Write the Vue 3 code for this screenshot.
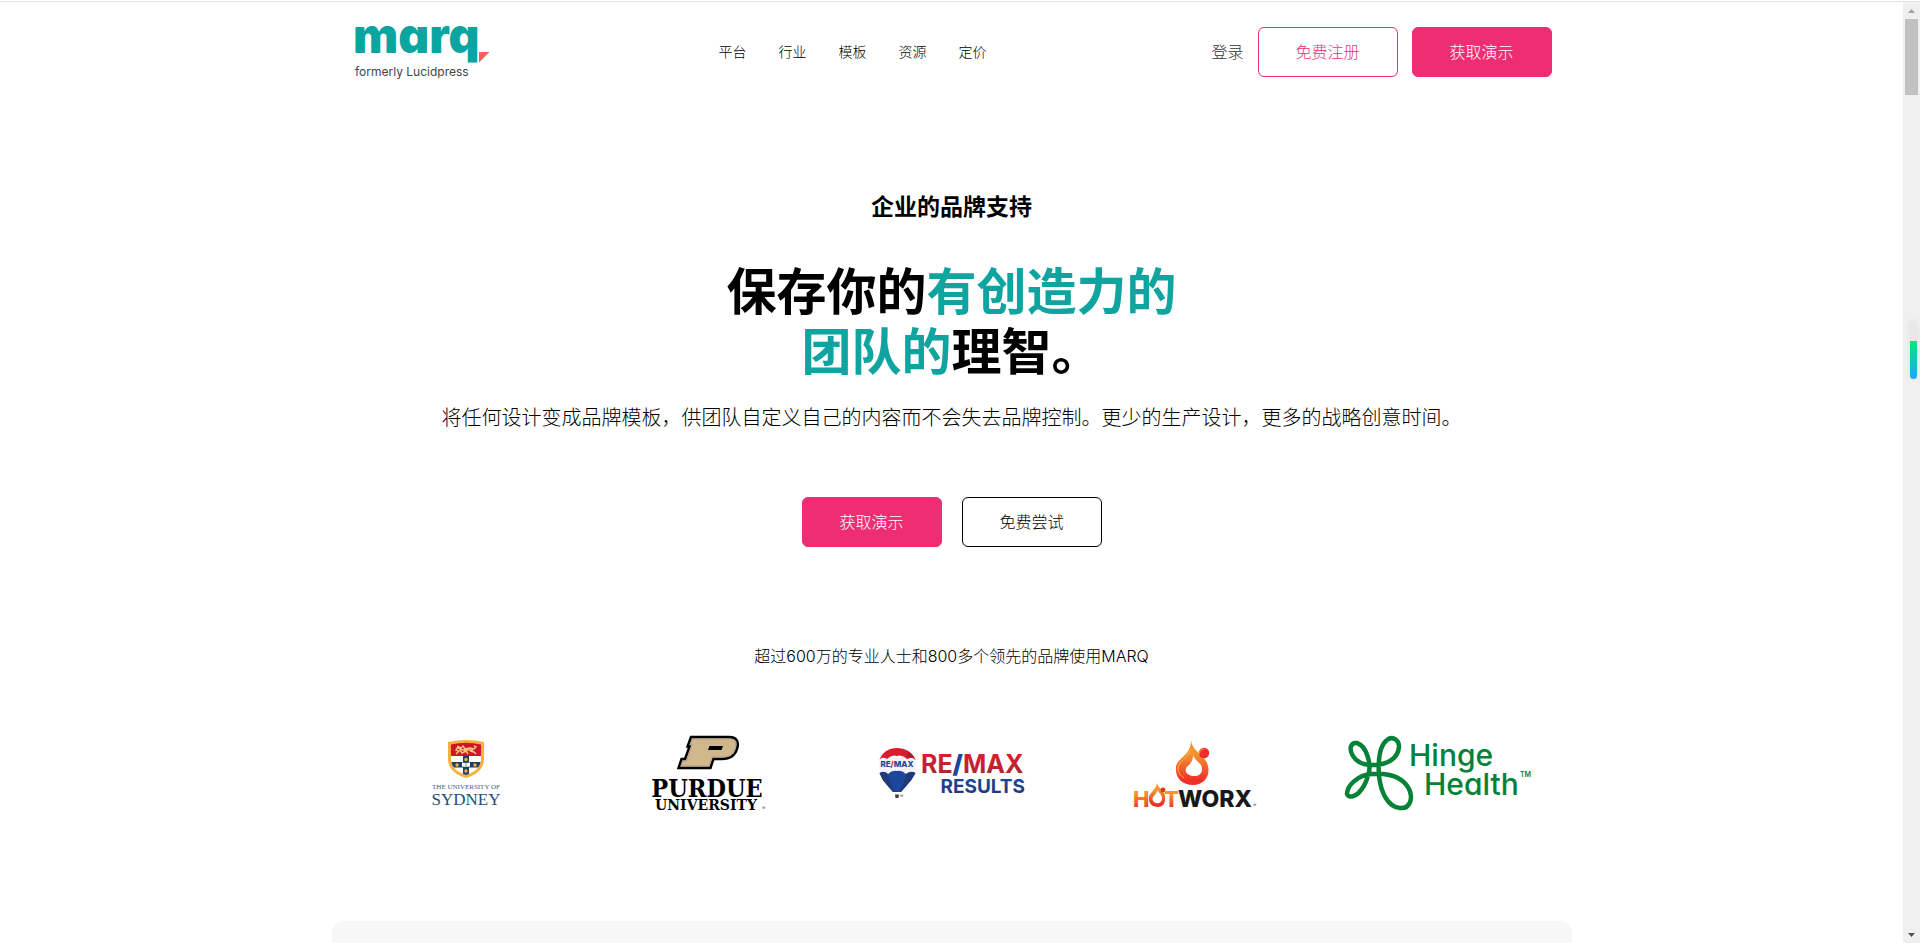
<script setup>
const navItems = ['平台', '行业', '模板', '资源', '定价']
</script>

<template>
  <div class="window">
    <div class="page">
      <header class="header">
        <a class="brand" href="#" aria-label="marq">
          <svg width="136" height="54" viewBox="0 0 136 54">
            <text class="wordmark" x="-2" y="28">marq</text>
            <path d="M124 27H134.500L124 37.500Z" fill="#f4605c" />
            <text class="formerly" x="0" y="51">formerly Lucidpress</text>
          </svg>
        </a>
        <nav class="nav">
          <a v-for="item in navItems" :key="item" href="#">{{ item }}</a>
        </nav>
        <div class="actions">
          <a class="login" href="#">登录</a>
          <button class="btn outline-pink">免费注册</button>
          <button class="btn pink">获取演示</button>
        </div>
      </header>

      <main class="hero">
        <h2>企业的品牌支持</h2>
        <h1>保存你的<em>有创造力的<br />团队的</em>理智。</h1>
        <p class="lead">将任何设计变成品牌模板，供团队自定义自己的内容而不会失去品牌控制。更少的生产设计，更多的战略创意时间。</p>
        <div class="cta">
          <button class="btn pink">获取演示</button>
          <button class="btn outline-black">免费尝试</button>
        </div>
        <p class="stat">超过600万的专业人士和800多个领先的品牌使用MARQ</p>
      </main>

      <section class="logos">
        <div>
          <svg width="70" height="76" viewBox="0 0 70 76">
            <path d="M17 6Q35 2 53 6V23C53 33 45 39 35 42 25 39 17 33 17 23Z" fill="#f6b13c" />
            <path d="M20 8.500Q35 5 50 8.500V20H20Z" fill="#d0142c" />
            <path d="M20 20H50V23C50 31 44 36 35 39 26 36 20 31 20 23Z" fill="#fff" />
            <path d="M32 20H38V26H49.500Q49 30 47 31.500H38V38L35 39 32 38V31.500H23Q21 30 20.500 26H32Z" fill="#1d3f63" />
            <path d="M25 18 28 15 25 14 27 10.500 30 12 32 10 34 13 39 12 43 13 45 11 43 10M29 14 31 17 35 15 37 18M39 15 43 16 45 18M27 12 32 14 42 14" fill="none" stroke="#f8c77b" stroke-width="1.400" />
            <path d="M31 26.500 35 27 39 26.500V30.500L35 31 31 30.500Z" fill="#fff" />
            <path d="M35 27V31" stroke="#1d3f63" stroke-width=".6" />
            <g fill="#f6b13c">
              <circle cx="35" cy="23.500" r="1.700" /><circle cx="26" cy="29" r="1.700" />
              <circle cx="44" cy="29" r="1.700" /><circle cx="35" cy="35" r="1.700" />
            </g>
            <text class="syd-small" x="35" y="53" text-anchor="middle">THE UNIVERSITY OF</text>
            <text class="syd" x="35" y="69" text-anchor="middle">SYDNEY</text>
          </svg>
        </div>
        <div>
          <svg width="116" height="76" viewBox="0 0 116 76">
            <path d="M40 1H78C87 1 88 7 86 13 84 20 79 23 71 23H62.500L59.500 32H27.500L30.500 23H34L38.500 10.500H36.500Z" fill="#d0b88c" stroke="#000" stroke-width="2.400" />
            <path d="M42 3H78C85 3 85.500 7 84 12.500 82 19 78 21 71 21H61L58 30H30L32 25H35.500L41.500 8.500H39.500Z" fill="none" stroke="#a49b91" stroke-width=".8" />
            <path d="M58.500 10H72L70.500 14H57Z" fill="#000" />
            <text class="purdue" x="56" y="61" text-anchor="middle">PURDUE</text>
            <text class="univ" x="55" y="74" text-anchor="middle">UNIVERSITY</text>
            <text class="reg" x="111" y="74">®</text>
          </svg>
        </div>
        <div>
          <svg width="148" height="76" viewBox="0 0 148 76">
            <defs>
              <linearGradient id="remaxRed" x1="0" y1="0" x2="0" y2="1">
                <stop offset=".25" stop-color="#dc1b2e" /><stop offset=".9" stop-color="#9f2c31" />
              </linearGradient>
              <linearGradient id="remaxBlue" x1="0" y1="0" x2="0" y2="1">
                <stop offset="0" stop-color="#1948a3" /><stop offset="1" stop-color="#203675" />
              </linearGradient>
            </defs>
            <path d="M1 25Q19 17 38 25L37 38 2 38Z" fill="#f3f3f5" />
            <path d="M1.500 24C4 16 11 12 19 12S35 16 37.500 24Q34 20 29 23 24 18 19 20 14 18 9 23 4 20 1.500 24Z" fill="#d91d2f" />
            <path d="M29 15Q35 18 37.500 24 34 20 30 23Z" fill="#a91d29" />
            <path d="M1.500 37Q6 34 10 38 14 34 19 35 24 34 28 38 33 34 37.500 37 34 44 29 49L23 56H15L9 49Q4 44 1.500 37Z" fill="#1c469c" />
            <path d="M10 38Q13 49 16 56H15L9 49Q4 44 1.500 37 7 35 10 38ZM28 38Q25 49 22 56H23L29 49Q34 44 37.500 37 32 35 28 38Z" fill="#203a79" />
            <path d="M17 58.500H21L20.500 62H17.500Z" fill="#443d40" />
            <text class="balloon" x="19" y="31" text-anchor="middle">RE<tspan fill="#d91d2f">/</tspan>MAX</text>
            <text class="reg" x="22" y="62">®</text>
            <text class="remax" x="43" y="37">RE<tspan class="slash">/</tspan>MAX</text>
            <text class="results" x="147" y="57" text-anchor="end">RESULTS</text>
          </svg>
        </div>
        <div>
          <svg width="124" height="76" viewBox="0 0 124 76">
            <defs>
              <linearGradient id="flame" x1="0" y1="0" x2="0" y2="1">
                <stop offset=".3" stop-color="#f6942e" /><stop offset=".9" stop-color="#ef3029" />
              </linearGradient>
            </defs>
            <path d="M58 4C59 14 68 17 73 25 79 35 74 49 60 49 49 49 42 42 43 31 44 22 58 20 58 4Z" fill="url(#flame)" />
            <path d="M60 19C61 23 66 26 68 29 71 36 67 40 61 40 54 40 49 34 56 29 59 26 60 23 60 19Z" fill="#fff" />
            <path d="M57 14C55 23 46 24 45 32 45 37 48 40 51 42" fill="none" stroke="#fbb846" stroke-width="1" />
            <circle cx="71" cy="17" r="5.200" fill="#ed2d2a" />
            <path d="M66.500 18A5 5 0 0 1 71 13" fill="none" stroke="#fa9552" stroke-width="1" />
            <text class="hot" x="0" y="71">H</text>
            <path d="M24 47C25 52 31 54 32 60 33 67 30 71 25 71 19 71 15 67 16 61 17 56 23 54 24 47Z" fill="url(#flame)" />
            <path d="M25 54C25 57 29 58 29 62 29 66 26 68 23 67 18 65 19 61 22 59Z" fill="#fff" />
            <circle cx="30" cy="54" r="2.400" fill="#ed2d2a" />
            <text class="hot" x="31" y="71">T</text>
            <text class="worx" x="45" y="71">WORX</text>
            <text class="reg" x="120" y="71">®</text>
          </svg>
        </div>
        <div>
          <svg width="186" height="76" viewBox="0 0 186 76">
            <g fill="none" stroke="#058237" stroke-width="4.500">
              <path d="M23 39C27 30 22 10 12 7 5 6 4 14 8 20 12 27 19 29 28 29 43 29 53 22 54 11 54 3 47 0 42 4 34 10 33 25 34 40 36 57 43 71 55 72 66 73 68 61 64 53 57 40 42 37 27 38 12 39 2 50 2 58 4 63 12 60 16 54Q21 48 23 39Z" />
            </g>
            <text class="hinge" x="64" y="30">Hinge</text>
            <text class="hinge" x="79" y="59">Health</text>
            <text class="tm" x="175" y="41">TM</text>
          </svg>
        </div>
      </section>

      <section class="panel"></section>
    </div>

    <div class="scrollbar">
      <svg class="arrow" width="7" height="4" viewBox="0 0 7 4"><path d="M0 4 3.500 0 7 4Z" fill="#a3a3a3" /></svg>
      <div class="thumb"></div>
      <div class="meter"></div>
      <svg class="arrow down" width="7" height="4" viewBox="0 0 7 4"><path d="M0 0H7L3.500 4Z" fill="#505050" /></svg>
    </div>
  </div>
</template>

<style>
body {
  margin: 0;
  background: #fff;
}
</style>

<style scoped>
.window {
  display: flex;
  box-sizing: border-box;
  height: 100vh;
  overflow: hidden;
  padding-top: 1px;
  font-family: Inter, "Noto Sans CJK SC", sans-serif;
  font-weight: 300;
  color: #000;
}
.page {
  flex: 1;
  display: flex;
  flex-direction: column;
  border-top: 1px solid #e5e5e5;
}
.header,
.panel {
  box-sizing: border-box;
  width: 100%;
  max-width: 1240px;
  margin: 0 auto;
}
.header {
  display: flex;
  align-items: center;
  padding: 23px 20px 0 23px;
}
.brand {
  display: block;
  height: 54px;
}
svg {
  display: block;
  overflow: visible;
}
.nav {
  display: flex;
  gap: 32px;
  margin-left: 228px;
  padding-bottom: 3px;
  font-size: 14px;
}
a {
  color: inherit;
  text-decoration: none;
}
.actions {
  display: flex;
  align-items: center;
  gap: 14px;
  margin-left: auto;
}
.login {
  padding-bottom: 3px;
  color: #333;
  font-size: 16px;
}
.btn {
  width: 140px;
  height: 50px;
  padding: 0 0 3px;
  border: 1px solid #ee2d72;
  border-radius: 6px;
  background: #fff;
  color: #ee2d72;
  font: inherit;
  font-size: 16px;
}
.btn.pink {
  background: #ee2d72;
  color: #fff;
}
.btn.outline-black {
  border-color: #000;
  color: #000;
}
.hero {
  display: flex;
  flex-direction: column;
  align-items: center;
  text-align: center;
}
h2 {
  margin: 110px 0 0;
  font-size: 23px;
  line-height: 36px;
}
h1 {
  margin: 37px 0 0;
  font-size: 50px;
  line-height: 60px;
}
h1 em {
  color: #10a4a0;
  font-style: normal;
}
.lead {
  margin: 21px 0 0;
  font-size: 20px;
  line-height: 30px;
}
.cta {
  display: flex;
  gap: 20px;
  margin-top: 64px;
}
.stat {
  margin: 96px 0 0;
  font-size: 16px;
  line-height: 26px;
}
.logos {
  display: grid;
  grid-template-columns: repeat(5, 1fr);
  justify-items: center;
  width: 100%;
  max-width: 1215px;
  margin: 67px auto 0;
}
.panel {
  flex: 1;
  margin-top: 109px;
  border-radius: 12px 12px 0 0;
  background: #f7f7f7;
}
.wordmark {
  font: 900 48px Inter, sans-serif;
  font-feature-settings: "cv11";
  fill: #0aa5a1;
}
.formerly {
  font: 12px Inter, sans-serif;
  fill: #414549;
}
.syd-small {
  font: 7px "Liberation Serif", serif;
  fill: #3b6487;
}
.syd {
  font: 17px "Liberation Serif", serif;
  fill: #1f4e79;
}
.purdue {
  font: bold 25px "DejaVu Serif Condensed", "DejaVu Serif", serif;
}
.univ {
  font: bold 14px "DejaVu Serif", serif;
}
.reg {
  font: 5px Inter, sans-serif;
  fill: #555;
}
.balloon {
  font: 800 8px Inter, sans-serif;
  fill: #1c469c;
}
.remax {
  font: 700 25px Inter, sans-serif;
  fill: url(#remaxRed);
}
.slash {
  fill: #1c469c;
  font-weight: 900;
}
.results {
  font: 700 19px Inter, sans-serif;
  fill: url(#remaxBlue);
}
.hot {
  font: 800 22px Inter, sans-serif;
  fill: url(#flame);
}
.worx {
  font: 800 23px Inter, sans-serif;
  fill: #191919;
}
.hinge {
  font: 500 30px Inter, sans-serif;
  font-feature-settings: "cv11";
  fill: #058237;
}
.tm {
  font: 600 7px Inter, sans-serif;
  fill: #058237;
}
.scrollbar {
  display: flex;
  flex-direction: column;
  align-items: center;
  box-sizing: border-box;
  width: 17px;
  padding: 7px 0 6px;
  border-top: 1px solid #e5e5e5;
  background: #f0f0f0;
}
.thumb {
  width: 13px;
  height: 76px;
  margin-top: 6px;
  background: #c1c1c1;
}
.meter {
  align-self: flex-end;
  width: 7px;
  height: 58px;
  margin: 226px 3px 0 0;
  border-radius: 4px;
  background: linear-gradient(#e8e8e8 20px, #08e779 20px, #20a5f8);
  box-shadow: 0 0 5px #ddd;
}
.down {
  margin-top: auto;
}
</style>
